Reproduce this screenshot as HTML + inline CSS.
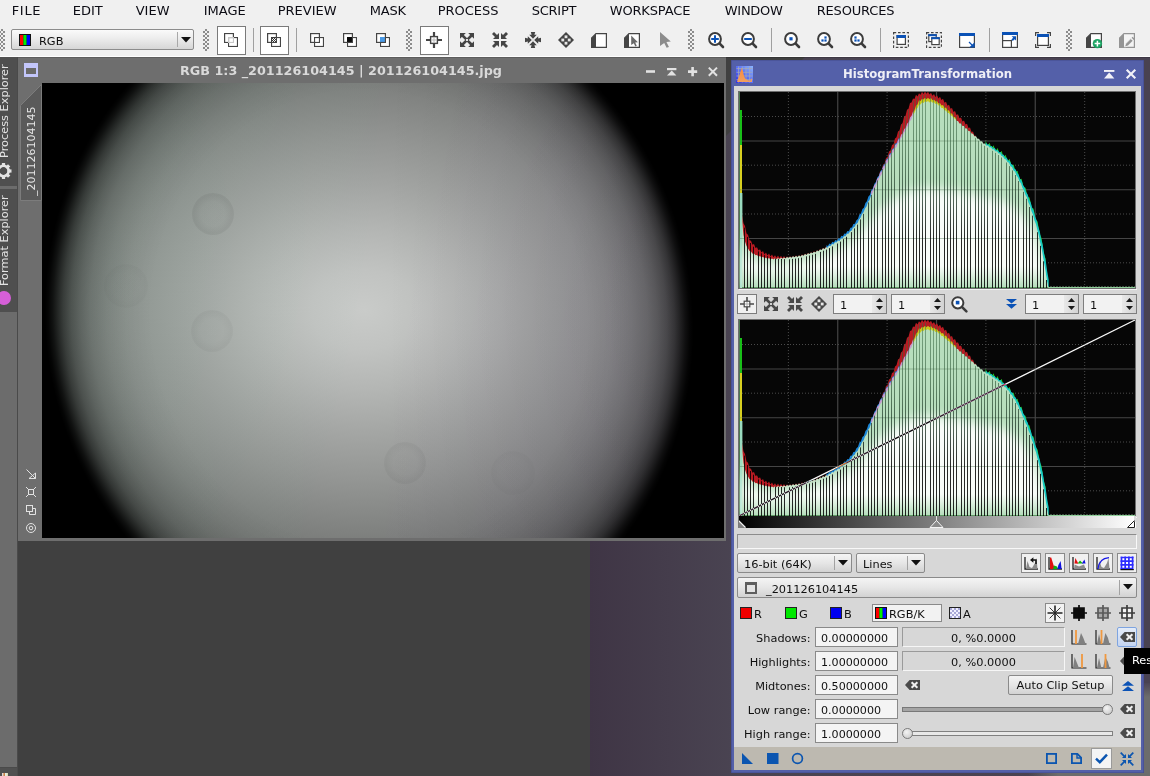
<!DOCTYPE html>
<html><head><meta charset="utf-8"><title>PixInsight</title>
<style>
*{box-sizing:border-box;margin:0;padding:0}
html,body{width:1150px;height:776px;overflow:hidden;background:#404040}
body{position:relative;font-family:"DejaVu Sans","Liberation Sans",sans-serif;font-size:11.33px;color:#101010;line-height:15px}
div,span,svg.ic{position:absolute}
svg.ic{overflow:visible}
#menubar{left:0;top:0;width:1150px;height:20px;background:#f0f0f0;white-space:nowrap}
#menubar span{top:3px;line-height:15px;color:#0c0c14;font-size:13px}
#toolbar{left:0;top:20px;width:1150px;height:37px;background:#f0f0f0;border-bottom:1px solid #fdfdfd}
.grip{width:6px;height:22px;top:9px;background-color:#f0f0f0;background-image:linear-gradient(45deg,#8c8c8c 25%,transparent 25%,transparent 75%,#8c8c8c 75%),linear-gradient(45deg,#8c8c8c 25%,transparent 25%,transparent 75%,#8c8c8c 75%);background-size:4px 4px;background-position:0 0,2px 2px}
.tsep{width:1px;height:24px;top:8px;background:#a0a0a0}
.tbtn{width:29px;height:29px;top:6px;background:#fff;border:1px solid #7a7a7a}
#workspace{left:18px;top:57px;width:1132px;height:719px;background:#404040}
#wsp{left:0;top:0;width:1132px;height:719px;background:linear-gradient(90deg,#3f3545 572px,#4a4452 720px,#494251 1132px);clip-path:polygon(572px 719px,572px 215px,794px -7px,1132px -7px,1132px 719px)}
#wsl{left:0;top:0;width:1132px;height:1px;background:rgba(0,0,0,.16)}
#sidebar{left:0;top:57px;width:18px;height:719px;background:#6c6c6c;border-right:1px solid #4a4a4a;overflow:hidden}
.vtxt{transform-origin:0 0;transform:rotate(-90deg);white-space:nowrap;line-height:15px;height:15px}

</style></head><body>
<div id="menubar"><span style="left:11.7px;letter-spacing:0.7px">FILE</span><span style="left:72.7px">EDIT</span><span style="left:135.7px">VIEW</span><span style="left:203.7px">IMAGE</span><span style="left:277.7px">PREVIEW</span><span style="left:369.7px;letter-spacing:-0.2px">MASK</span><span style="left:437.7px">PROCESS</span><span style="left:531.7px;letter-spacing:-0.25px">SCRIPT</span><span style="left:609.7px;letter-spacing:-0.15px">WORKSPACE</span><span style="left:724.7px;letter-spacing:-0.25px">WINDOW</span><span style="left:816.7px;letter-spacing:-0.18px">RESOURCES</span></div>
<div id="toolbar"><div style="left:11px;top:9px;width:183px;height:21px;border:1px solid #8c8c8c;border-radius:2px;background:linear-gradient(#fafafa,#ececec 45%,#d6d6d6)"><svg class="ic" style="left:7px;top:4px" width="12" height="12" viewBox="0 0 12 12"><rect width="12" height="12" fill="#111"/><rect x="1" y="1" width="3.4" height="10" fill="#f00"/><rect x="4.4" y="1" width="3.3" height="10" fill="#0e0"/><rect x="7.7" y="1" width="3.3" height="10" fill="#00f"/></svg><span style="left:27px;top:3.5px">RGB</span><div style="left:165px;top:2px;width:1px;height:15px;background:#a8a8a8"></div><svg class="ic" style="left:169px;top:7px" width="10" height="6" viewBox="0 0 10 6"><path d="M0 0H10L5 5.6Z" fill="#111"/></svg></div><div class="grip" style="left:-1px"></div><div class="grip" style="left:203px"></div><div class="grip" style="left:406px"></div><div class="grip" style="left:688px"></div><div class="grip" style="left:1066px"></div><div class="tsep" style="left:253px"></div><div class="tsep" style="left:296px"></div><div class="tsep" style="left:771px"></div><div class="tsep" style="left:880px"></div><div class="tsep" style="left:989px"></div><div class="tbtn" style="left:217px"></div><div class="tbtn" style="left:260px"></div><div class="tbtn" style="left:420px"></div><svg class="ic" style="left:224px;top:13px" width="14" height="14" viewBox="0 0 14 14" ><rect x="0.55" y="0.55" width="8.9" height="8.9" fill="#fff" stroke="#454545" stroke-width="1.1"/><rect x="4.55" y="4.55" width="8.9" height="8.9" fill="#fff" stroke="#454545" stroke-width="1.1"/><rect x="4.55" y="4.55" width="4.9" height="4.9" fill="none" stroke="#c8c8c8" stroke-width="1.1"/><path d="M4 9.45H0.55V0.55H9.45V4" fill="none" stroke="#454545" stroke-width="1.1"/></svg><svg class="ic" style="left:267px;top:13px" width="14" height="14" viewBox="0 0 14 14" ><rect x="0.55" y="0.55" width="8.9" height="8.9" fill="#fff" stroke="#454545" stroke-width="1.1"/><rect x="4.55" y="4.55" width="8.9" height="8.9" fill="#fff" stroke="#454545" stroke-width="1.1"/><rect x="4" y="4" width="1" height="1" fill="#333"/><rect x="4" y="6" width="1" height="1" fill="#333"/><rect x="4" y="8" width="1" height="1" fill="#333"/><rect x="5" y="5" width="1" height="1" fill="#333"/><rect x="5" y="7" width="1" height="1" fill="#333"/><rect x="5" y="9" width="1" height="1" fill="#333"/><rect x="6" y="4" width="1" height="1" fill="#333"/><rect x="6" y="6" width="1" height="1" fill="#333"/><rect x="6" y="8" width="1" height="1" fill="#333"/><rect x="7" y="5" width="1" height="1" fill="#333"/><rect x="7" y="7" width="1" height="1" fill="#333"/><rect x="7" y="9" width="1" height="1" fill="#333"/><rect x="8" y="4" width="1" height="1" fill="#333"/><rect x="8" y="6" width="1" height="1" fill="#333"/><rect x="8" y="8" width="1" height="1" fill="#333"/><rect x="9" y="5" width="1" height="1" fill="#333"/><rect x="9" y="7" width="1" height="1" fill="#333"/><rect x="9" y="9" width="1" height="1" fill="#333"/><rect x="0.55" y="0.55" width="8.9" height="8.9" fill="none" stroke="#454545" stroke-width="1.1"/></svg><svg class="ic" style="left:310px;top:13px" width="14" height="14" viewBox="0 0 14 14" ><rect x="0.55" y="0.55" width="8.9" height="8.9" fill="#fff" stroke="#454545" stroke-width="1.1"/><rect x="4.55" y="4.55" width="8.9" height="8.9" fill="#fff" stroke="#454545" stroke-width="1.1"/><rect x="0.55" y="0.55" width="8.9" height="8.9" fill="none" stroke="#454545" stroke-width="1.1"/></svg><svg class="ic" style="left:343px;top:13px" width="14" height="14" viewBox="0 0 14 14" ><rect x="0.55" y="0.55" width="8.9" height="8.9" fill="#fff" stroke="#454545" stroke-width="1.1"/><rect x="4.55" y="4.55" width="8.9" height="8.9" fill="#fff" stroke="#454545" stroke-width="1.1"/><rect x="4" y="4" width="6" height="6" fill="#0a0a0a"/><rect x="0.55" y="0.55" width="8.9" height="8.9" fill="none" stroke="#454545" stroke-width="1.1"/></svg><svg class="ic" style="left:376px;top:13px" width="14" height="14" viewBox="0 0 14 14" ><rect x="0.55" y="0.55" width="8.9" height="8.9" fill="#fff" stroke="#454545" stroke-width="1.1"/><rect x="4.55" y="4.55" width="8.9" height="8.9" fill="#fff" stroke="#454545" stroke-width="1.1"/><rect x="4" y="4" width="6" height="6" fill="#4a9ae6"/><rect x="0.55" y="0.55" width="8.9" height="8.9" fill="none" stroke="#454545" stroke-width="1.1"/></svg><svg class="ic" style="left:426px;top:12px" width="16" height="16" viewBox="0 0 16 16" ><path d="M8 0V16M0 8H16" stroke="#454545" stroke-width="2.2"/><rect x="4.6" y="4.6" width="6.8" height="6.8" fill="#fff" stroke="#454545" stroke-width="1.4"/><path d="M8 5.5V10.5M5.5 8H10.5" stroke="#bbb" stroke-width="1"/></svg><svg class="ic" style="left:460px;top:13px" width="14" height="14" viewBox="0 0 14 14" ><g transform="rotate(0 7 7)"><path d="M0 0H5.8L0 5.8Z" fill="#454545"/><path d="M2 2L6.4 6.4" stroke="#454545" stroke-width="2.7"/></g><g transform="rotate(90 7 7)"><path d="M0 0H5.8L0 5.8Z" fill="#454545"/><path d="M2 2L6.4 6.4" stroke="#454545" stroke-width="2.7"/></g><g transform="rotate(180 7 7)"><path d="M0 0H5.8L0 5.8Z" fill="#454545"/><path d="M2 2L6.4 6.4" stroke="#454545" stroke-width="2.7"/></g><g transform="rotate(270 7 7)"><path d="M0 0H5.8L0 5.8Z" fill="#454545"/><path d="M2 2L6.4 6.4" stroke="#454545" stroke-width="2.7"/></g><rect x="6" y="6" width="2" height="2" fill="#e0e0e0"/></svg><svg class="ic" style="left:492px;top:12px" width="16" height="16" viewBox="0 0 16 16" ><g transform="rotate(0 8 8)"><path d="M7 7V1L1 7Z" fill="#454545"/><path d="M1 1L5 5" stroke="#454545" stroke-width="2.8"/></g><g transform="rotate(90 8 8)"><path d="M7 7V1L1 7Z" fill="#454545"/><path d="M1 1L5 5" stroke="#454545" stroke-width="2.8"/></g><g transform="rotate(180 8 8)"><path d="M7 7V1L1 7Z" fill="#454545"/><path d="M1 1L5 5" stroke="#454545" stroke-width="2.8"/></g><g transform="rotate(270 8 8)"><path d="M7 7V1L1 7Z" fill="#454545"/><path d="M1 1L5 5" stroke="#454545" stroke-width="2.8"/></g></svg><svg class="ic" style="left:525px;top:12px" width="16" height="16" viewBox="0 0 16 16" ><g transform="rotate(0 8 8)"><path d="M8 6.8L4.2 2.8H6.6L5.8 0H10.2L9.4 2.8H11.8Z" fill="#454545"/></g><g transform="rotate(90 8 8)"><path d="M8 6.8L4.2 2.8H6.6L5.8 0H10.2L9.4 2.8H11.8Z" fill="#454545"/></g><g transform="rotate(180 8 8)"><path d="M8 6.8L4.2 2.8H6.6L5.8 0H10.2L9.4 2.8H11.8Z" fill="#454545"/></g><g transform="rotate(270 8 8)"><path d="M8 6.8L4.2 2.8H6.6L5.8 0H10.2L9.4 2.8H11.8Z" fill="#454545"/></g><rect x="7.2" y="7.2" width="1.6" height="1.6" fill="#ddd"/></svg><svg class="ic" style="left:558px;top:12px" width="16" height="16" viewBox="0 0 16 16" ><path d="M8 0L16 8L8 16L0 8Z" fill="#454545"/><rect x="6.6" y="3.4" width="2.8" height="2.8" fill="#e8e8e8"/><rect x="6.6" y="9.8" width="2.8" height="2.8" fill="#e8e8e8"/><rect x="3.4" y="6.6" width="2.8" height="2.8" fill="#e8e8e8"/><rect x="9.8" y="6.6" width="2.8" height="2.8" fill="#e8e8e8"/></svg><svg class="ic" style="left:591px;top:13px" width="16" height="15" viewBox="0 0 16 15" ><path d="M5 0.6H15.4V14.4H0.6V5Z" fill="#fff" stroke="#454545" stroke-width="1.2"/><path d="M5 0.6V14.4H0.6V5Z" fill="#454545"/></svg><svg class="ic" style="left:624px;top:13px" width="16" height="15" viewBox="0 0 16 15" ><path d="M5 0.6H15.4V14.4H0.6V5Z" fill="#fff" stroke="#454545" stroke-width="1.2"/><path d="M5 0.6V14.4H0.6V5Z" fill="#454545"/><path d="M0 0L8.2 8L4.9 8.3L6.8 12.4L5 13.2L3.2 9.2L0 11.6Z" transform="translate(7.2 2.6) scale(0.82)" fill="#6a6a6a"/></svg><svg class="ic" style="left:660px;top:12px" width="12" height="16" viewBox="0 0 12 16" ><path d="M0 0L8.2 8L4.9 8.3L6.8 12.4L5 13.2L3.2 9.2L0 11.6Z" transform="scale(1.32 1.2)" fill="#8c8c8c"/></svg><svg class="ic" style="left:708px;top:12px" width="16" height="16" viewBox="0 0 16 16" ><path d="M11.2 11.2L15 15" stroke="#3c3c3c" stroke-width="2.6" stroke-linecap="round"/><circle cx="7" cy="7" r="5.9" fill="#fff" stroke="#3c3c3c" stroke-width="2"/><path d="M7 3.2V10.8M3.2 7H10.8" stroke="#0b52b6" stroke-width="2"/></svg><svg class="ic" style="left:741px;top:12px" width="16" height="16" viewBox="0 0 16 16" ><path d="M11.2 11.2L15 15" stroke="#3c3c3c" stroke-width="2.6" stroke-linecap="round"/><circle cx="7" cy="7" r="5.9" fill="#fff" stroke="#3c3c3c" stroke-width="2"/><path d="M3.2 7H10.8" stroke="#0b52b6" stroke-width="2"/></svg><svg class="ic" style="left:784px;top:12px" width="16" height="16" viewBox="0 0 16 16" ><path d="M11.2 11.2L15 15" stroke="#3c3c3c" stroke-width="2.6" stroke-linecap="round"/><circle cx="7" cy="7" r="5.9" fill="#fff" stroke="#3c3c3c" stroke-width="2"/><rect x="5.4" y="5.2" width="3.2" height="3.2" fill="#0b52b6"/></svg><svg class="ic" style="left:817px;top:12px" width="16" height="16" viewBox="0 0 16 16" ><path d="M11.2 11.2L15 15" stroke="#3c3c3c" stroke-width="2.6" stroke-linecap="round"/><circle cx="7" cy="7" r="5.9" fill="#fff" stroke="#3c3c3c" stroke-width="2"/><rect x="7.4" y="4.4" width="2.2" height="2.2" fill="#0b52b6"/><rect x="4.4" y="7.4" width="2.2" height="2.2" fill="#0b52b6"/><rect x="7.4" y="7.4" width="2.2" height="2.2" fill="#0b52b6"/></svg><svg class="ic" style="left:850px;top:12px" width="16" height="16" viewBox="0 0 16 16" ><path d="M11.2 11.2L15 15" stroke="#3c3c3c" stroke-width="2.6" stroke-linecap="round"/><circle cx="7" cy="7" r="5.9" fill="#fff" stroke="#3c3c3c" stroke-width="2"/><rect x="4.4" y="4.4" width="2.2" height="2.2" fill="#0b52b6"/><rect x="4.4" y="7.4" width="2.2" height="2.2" fill="#0b52b6"/><rect x="7.4" y="7.4" width="2.2" height="2.2" fill="#0b52b6"/></svg><svg class="ic" style="left:893px;top:12px" width="16" height="16" viewBox="0 0 16 16" ><rect x="0.6" y="0.6" width="14.8" height="14.8" fill="none" stroke="#454545" stroke-width="1.2" stroke-dasharray="2.6 1.8"/><rect x="4.1" y="3.6" width="8.3" height="8.8" fill="#fff" stroke="#454545" stroke-width="1.2"/><rect x="3.5" y="3" width="9.5" height="3" fill="#0b52b6"/></svg><svg class="ic" style="left:926px;top:12px" width="16" height="16" viewBox="0 0 16 16" ><rect x="0.6" y="0.6" width="14.8" height="14.8" fill="none" stroke="#454545" stroke-width="1.2" stroke-dasharray="2.6 1.8"/><rect x="2.8000000000000003" y="2.8000000000000003" width="7.3999999999999995" height="6.8" fill="#fff" stroke="#454545" stroke-width="1.2"/><rect x="2.2" y="2.2" width="8.6" height="2" fill="#0b52b6"/><rect x="5.8" y="5.8" width="7.3999999999999995" height="6.8" fill="#fff" stroke="#454545" stroke-width="1.2"/><rect x="5.2" y="5.2" width="8.6" height="2" fill="#0b52b6"/></svg><svg class="ic" style="left:959px;top:13px" width="16" height="15" viewBox="0 0 16 15" ><rect x="0.6" y="0.6" width="14.8" height="13.8" fill="#fff" stroke="#454545" stroke-width="1.2"/><rect x="0" y="0" width="16" height="3" fill="#0b52b6"/><path d="M10 9L14.6 13.6" stroke="#0b52b6" stroke-width="1.3"/><path d="M15.6 9.2V14.6H10.2Z" fill="#0b52b6"/></svg><svg class="ic" style="left:1002px;top:12px" width="16" height="16" viewBox="0 0 16 16" ><rect x="0.6" y="0.6" width="14.8" height="14.8" fill="#fff" stroke="#454545" stroke-width="1.2"/><rect x="0" y="0" width="16" height="3" fill="#0b52b6"/><rect x="0.6" y="8.6" width="8.8" height="6.8" fill="#fff" stroke="#454545" stroke-width="1.2"/><path d="M9.6 4.2H14V8.6L12.6 7.2L10.8 9L9.4 7.6L11.2 5.8Z" fill="#0b52b6"/></svg><svg class="ic" style="left:1035px;top:12px" width="16" height="16" viewBox="0 0 16 16" ><path d="M0.6 4V0.6H4M12 0.6H15.4V4M15.4 12V15.4H12M4 15.4H0.6V12" fill="none" stroke="#454545" stroke-width="1.2"/><rect x="2.6" y="2.6" width="10.8" height="10.8" fill="#fff" stroke="#454545" stroke-width="1.2"/><rect x="2" y="2" width="12" height="3" fill="#0b52b6"/></svg><svg class="ic" style="left:1086px;top:13px" width="17" height="16" viewBox="0 0 17 16" ><path d="M5 0.6H15.4V14.4H0.6V5Z" fill="#fff" stroke="#454545" stroke-width="1.2"/><path d="M5 0.6V14.4H0.6V5Z" fill="#454545"/><circle cx="11.4" cy="10.6" r="4.7" fill="#1ca463"/><path d="M11.4 7.8V13.4M8.6 10.6H14.2" stroke="#fff" stroke-width="1.5"/></svg><svg class="ic" style="left:1119px;top:13px" width="17" height="16" viewBox="0 0 17 16" ><path d="M5 0.6H15.4V14.4H0.6V5Z" fill="#f4f4f4" stroke="#949494" stroke-width="1.2"/><path d="M5 0.6V14.4H0.6V5Z" fill="#949494"/><path d="M5.6 14L6.6 10.8L11.8 5.6L14 7.8L8.8 13Z" fill="#949494" stroke="#f4f4f4" stroke-width="0.8"/><path d="M12.6 4.8L13.6 3.8L15.8 6L14.8 7Z" fill="#949494"/></svg></div>
<div id="workspace"><div id="wsp"></div><div id="wsl"></div><div style="left:1126px;top:626px;width:6px;height:93px;background:linear-gradient(#4c4555,#6c6c6c 14px)"></div><div style="left:1010px;top:716px;width:122px;height:3px;background:linear-gradient(90deg,rgba(108,108,108,0),#6c6c6c 30px)"></div></div>
<div id="sidebar"><div style="left:0;top:0;width:17px;height:129px;background:#4f4f4f"></div><div style="left:0;top:132px;width:17px;height:123px;background:#4f4f4f"></div><div style="left:0;top:710px;width:17px;height:1px;background:#4a4a4a"></div><div style="left:0;top:711px;width:17px;height:8px;background:#505050"></div><div style="left:2px;top:716px;width:6px;height:3px;background:linear-gradient(90deg,#e8f0ff,#c87838 40%,#e8f8f0 60%,#d8d0a0)"></div><div class="vtxt" style="left:-3px;top:101px;color:#e4e4e4;font-size:11.33px">Process Explorer</div><div class="vtxt" style="left:-3px;top:229px;color:#e4e4e4;font-size:11.33px">Format Explorer</div><svg class="ic" style="left:0px;top:106px" width="16" height="16" viewBox="0 0 16 16" ><g transform="translate(3.5 8)"><rect x="-1.6" y="-8" width="3.2" height="4" fill="#e4e4e4" transform="rotate(0)"/><rect x="-1.6" y="-8" width="3.2" height="4" fill="#e4e4e4" transform="rotate(45)"/><rect x="-1.6" y="-8" width="3.2" height="4" fill="#e4e4e4" transform="rotate(90)"/><rect x="-1.6" y="-8" width="3.2" height="4" fill="#e4e4e4" transform="rotate(135)"/><rect x="-1.6" y="-8" width="3.2" height="4" fill="#e4e4e4" transform="rotate(180)"/><rect x="-1.6" y="-8" width="3.2" height="4" fill="#e4e4e4" transform="rotate(225)"/><rect x="-1.6" y="-8" width="3.2" height="4" fill="#e4e4e4" transform="rotate(270)"/><rect x="-1.6" y="-8" width="3.2" height="4" fill="#e4e4e4" transform="rotate(315)"/><circle r="5.2" fill="none" stroke="#e4e4e4" stroke-width="2.6"/></g></svg><div style="left:-3px;top:234px;width:14px;height:14px;border-radius:7px;background:#d65fd8"></div></div>
<div id="imgwin" style="left:18px;top:57px;width:708px;height:484px;background:#6e6e6e"><div style="left:0;top:0;width:708px;height:1px;background:#5c5c5c"></div><div style="left:6px;top:6px;width:14px;height:14px;border:2px solid #c3c6fb;border-top-width:5px;border-bottom-width:3px;background:#6a6a6a"></div><div style="left:0;top:6px;width:708px;text-align:center;font-weight:bold;font-size:12.75px;color:#d9d9d9;white-space:nowrap"><span style="position:relative;left:-31px">RGB 1:3 _201126104145 | 201126104145.jpg</span></div><svg class="ic" style="left:628px;top:10px" width="10" height="10" viewBox="0 0 10 10" ><rect x="0" y="3.2" width="9" height="2.6" fill="#e2e2e2"/></svg><svg class="ic" style="left:649px;top:10px" width="10" height="10" viewBox="0 0 10 10" ><rect x="0" y="1" width="9.4" height="2.2" fill="#e2e2e2"/><path d="M4.7 3.4L9.4 8.6H0Z" fill="#e2e2e2"/></svg><svg class="ic" style="left:670px;top:10px" width="10" height="10" viewBox="0 0 10 10" ><path d="M4.6 0V9.2M0 4.6H9.2" stroke="#e2e2e2" stroke-width="2.6"/></svg><svg class="ic" style="left:690px;top:10px" width="10" height="10" viewBox="0 0 10 10" ><path d="M0.8 0.6L9 8.8M9 0.6L0.8 8.8" stroke="#e2e2e2" stroke-width="2"/></svg><svg class="ic" style="left:2px;top:27px" width="22" height="117" viewBox="0 0 22 117" ><path d="M0.5 21.5L21.5 0.5V116.5H0.5Z" fill="#5a5a5a" stroke="#7c7c7c" stroke-width="1"/></svg><div class="vtxt" style="left:6px;top:139px;color:#e4e4e4;font-size:11px">_201126104145</div><svg class="ic" style="left:8px;top:412px" width="10" height="10" viewBox="0 0 10 10" ><path d="M0.5 0.5L9.5 9.5M9.5 4V9.5H3Z" fill="none" stroke="#e2e2e2" stroke-width="1"/></svg><svg class="ic" style="left:8px;top:430px" width="10" height="10" viewBox="0 0 10 10" ><rect x="2.5" y="2.5" width="5" height="5" fill="none" stroke="#e2e2e2"/><path d="M0 0L2.5 2.5M10 0L7.5 2.5M0 10L2.5 7.5M10 10L7.5 7.5" stroke="#e2e2e2"/></svg><svg class="ic" style="left:8px;top:448px" width="10" height="10" viewBox="0 0 10 10" ><rect x="0.5" y="0.5" width="6" height="6" fill="none" stroke="#e2e2e2"/><path d="M6.5 3.5H9.5V9.5H3.5V6.5" fill="none" stroke="#e2e2e2"/></svg><svg class="ic" style="left:8px;top:466px" width="10" height="10" viewBox="0 0 10 10" ><circle cx="5" cy="5" r="4.5" fill="none" stroke="#e2e2e2"/><circle cx="5" cy="5" r="1.8" fill="none" stroke="#e2e2e2"/></svg><div id="img" style="left:24px;top:26px;width:682px;height:455px;overflow:hidden;background:#000"><div style="left:0;top:0;width:682px;height:455px;background:radial-gradient(ellipse 440px 330px at 322px 227px,#c9cbc9 0,#c1c3c1 12%,#b4b6b4 24%,#a3a5a3 38%,#939593 52%,#898b89 60%,#7c7e7c 70%,#707270 80%,#5c5e5c 100%)"></div><div style="left:0;top:0;width:682px;height:455px;background:linear-gradient(100deg,rgba(0,255,128,.035),rgba(0,0,0,0) 50%,rgba(128,0,255,.035)),linear-gradient(90deg,rgba(0,0,0,0) 50%,rgba(0,0,0,.09))"></div><div style="left:150px;top:110px;width:42px;height:42px;border-radius:50%;background:radial-gradient(circle,rgba(0,0,0,0.006) 0,rgba(0,0,0,0.012) 40%,rgba(0,0,0,0.060) 64%,rgba(0,0,0,0.048) 78%,rgba(0,0,0,0) 100%)"></div><div style="left:149px;top:227px;width:42px;height:42px;border-radius:50%;background:radial-gradient(circle,rgba(0,0,0,0.004) 0,rgba(0,0,0,0.007) 40%,rgba(0,0,0,0.035) 64%,rgba(0,0,0,0.028) 78%,rgba(0,0,0,0) 100%)"></div><div style="left:342px;top:359px;width:42px;height:42px;border-radius:50%;background:radial-gradient(circle,rgba(0,0,0,0.004) 0,rgba(0,0,0,0.008) 40%,rgba(0,0,0,0.040) 64%,rgba(0,0,0,0.032) 78%,rgba(0,0,0,0) 100%)"></div><div style="left:62px;top:181px;width:44px;height:44px;border-radius:50%;background:radial-gradient(circle,rgba(0,0,0,0.002) 0,rgba(0,0,0,0.004) 40%,rgba(0,0,0,0.020) 64%,rgba(0,0,0,0.016) 78%,rgba(0,0,0,0) 100%)"></div><div style="left:449px;top:368px;width:44px;height:44px;border-radius:50%;background:radial-gradient(circle,rgba(0,0,0,0.002) 0,rgba(0,0,0,0.004) 40%,rgba(0,0,0,0.020) 64%,rgba(0,0,0,0.016) 78%,rgba(0,0,0,0) 100%)"></div><div style="left:-100px;top:-100px;width:882px;height:655px;transform-origin:427px 337px;transform:skewX(1.72deg);background:radial-gradient(ellipse 324px 340px at 427px 337px,rgba(0,0,0,0) 0,rgba(0,0,0,0) 67%,rgba(0,0,0,.035) 75%,rgba(0,0,0,.09) 81%,rgba(0,0,0,.17) 86%,rgba(0,0,0,.26) 89%,rgba(0,0,0,.38) 91.9%,rgba(0,0,0,.54) 94.3%,rgba(0,0,0,.67) 95.7%,rgba(0,0,0,.86) 97.6%,rgba(0,0,0,.96) 99%,#000 100%)"></div></div></div>
<div id="ht" style="left:0;top:0;width:0;height:0"><div style="left:731px;top:60px;width:413px;height:713px;background:#5460a9;box-shadow:inset 0 0 0 0.6px #434a8c"></div><div style="left:734px;top:86px;width:407px;height:661px;background:#d7d7d7"></div><div style="left:734px;top:747px;width:407px;height:23px;background:#bdb9b0"></div><svg class="ic" style="left:736px;top:66px" width="17" height="17" viewBox="0 0 17 17" ><defs><linearGradient id="tig" x1="1" y1="0" x2="0" y2="1"><stop offset="0" stop-color="#8cb6ff"/><stop offset=".5" stop-color="#5a70f4"/><stop offset="1" stop-color="#3434e0"/></linearGradient><linearGradient id="tio" x1="0" y1="0" x2="0" y2="1"><stop offset="0" stop-color="#ff8a3a"/><stop offset="1" stop-color="#f0a060"/></linearGradient></defs><rect width="17" height="17" fill="url(#tig)"/><path d="M2.6 0.5V16.5M0.5 2.6H16.5" stroke="#a4a8b8" stroke-width="0.8"/><path d="M6.3 0.5V16.5M0.5 6.3H16.5" stroke="#a4a8b8" stroke-width="0.8"/><path d="M10.0 0.5V16.5M0.5 10.0H16.5" stroke="#a4a8b8" stroke-width="0.8"/><path d="M13.7 0.5V16.5M0.5 13.7H16.5" stroke="#a4a8b8" stroke-width="0.8"/><path d="M1 16L2 13L3.5 9L5 4L5.8 2.2L6.8 5L8 10L9.5 13L12 14.2L14.6 14.4L15.2 12.4L16 12.8V16Z" fill="url(#tio)"/></svg><div style="left:731px;top:66.5px;width:413px;text-align:center;font-weight:bold;font-size:11.7px;color:#eeeef6;white-space:nowrap"><span style="position:relative;left:-10px">HistogramTransformation</span></div><svg class="ic" style="left:1104px;top:70px" width="11" height="9" viewBox="0 0 11 9" ><rect x="0" y="0" width="10.4" height="1.9" fill="#f2f2f8"/><path d="M5.2 2.6L10.4 8.4H0Z" fill="#f2f2f8"/></svg><svg class="ic" style="left:1126px;top:69px" width="10" height="10" viewBox="0 0 10 10" ><path d="M0.7 0.7L9.3 9.3M9.3 0.7L0.7 9.3" stroke="#f2f2f8" stroke-width="2.1"/></svg><svg class="ic" style="left:738px;top:91px" width="400" height="200" viewBox="738 91 400 200"><defs><clipPath id="hca"><path d="M739.0 288L739.0 109.4L740.5 111.3L742.0 221.4L743.5 235.1L745.0 241.4L746.5 246.1L748.0 248.4L749.5 251.1L751.0 251.4L752.5 253.8L754.0 253.4L755.5 255.3L757.0 254.9L758.5 256.7L760.0 256.0L761.5 257.6L763.0 256.8L764.5 258.5L766.0 257.5L767.5 259.0L769.0 258.0L770.5 259.4L772.0 258.4L773.5 259.5L775.0 258.2L776.5 259.3L778.0 257.9L779.5 259.0L781.0 257.7L782.5 258.8L784.0 257.5L785.5 258.5L787.0 257.1L788.5 258.1L790.0 256.7L791.5 257.7L793.0 256.3L794.5 257.3L796.0 255.9L797.5 256.9L799.0 255.5L800.5 256.5L802.0 254.9L803.5 255.7L805.0 254.1L806.5 254.9L808.0 253.3L809.5 254.1L811.0 252.5L812.5 253.3L814.0 251.7L815.5 252.4L817.0 250.6L818.5 251.3L820.0 249.5L821.5 250.1L823.0 248.3L824.5 248.9L826.0 247.2L827.5 247.8L829.0 245.8L830.5 246.1L832.0 244.1L833.5 244.4L835.0 242.3L836.5 242.6L838.0 240.6L839.5 240.9L841.0 238.6L842.5 238.6L844.0 236.2L845.5 236.2L847.0 233.8L848.5 233.8L850.0 231.4L851.5 230.7L853.0 227.7L854.5 227.0L856.0 223.9L857.5 223.2L859.0 219.5L860.5 218.0L862.0 214.0L863.5 212.4L865.0 208.4L866.5 206.4L868.0 202.0L869.5 200.0L871.0 195.5L872.5 193.5L874.0 189.2L875.5 187.2L877.0 182.8L878.5 180.8L880.0 176.4L881.5 174.6L883.0 170.4L884.5 168.6L886.0 164.4L887.5 162.6L889.0 158.7L890.5 157.3L892.0 153.5L893.5 152.2L895.0 148.4L896.5 147.0L898.0 143.3L899.5 141.9L901.0 138.1L902.5 136.7L904.0 132.7L905.5 131.1L907.0 127.1L908.5 125.5L910.0 121.2L911.5 119.2L913.0 114.7L914.5 112.7L916.0 109.0L917.5 108.1L919.0 104.8L920.5 104.4L922.0 102.6L923.5 103.1L925.0 101.3L926.5 102.1L928.0 101.1L929.5 102.4L931.0 101.3L932.5 102.8L934.0 102.2L935.5 104.1L937.0 103.5L938.5 105.5L940.0 105.5L941.5 107.9L943.0 108.0L944.5 110.4L946.0 110.4L947.5 112.9L949.0 113.1L950.5 115.6L952.0 115.7L953.5 118.3L955.0 118.4L956.5 120.9L958.0 121.0L959.5 123.4L961.0 123.5L962.5 126.0L964.0 126.1L965.5 128.5L967.0 128.6L968.5 131.1L970.0 131.2L971.5 133.6L973.0 133.7L974.5 136.2L976.0 136.2L977.5 138.7L979.0 138.7L980.5 141.2L982.0 141.2L983.5 143.7L985.0 143.5L986.5 145.7L988.0 145.4L989.5 147.5L991.0 147.3L992.5 149.4L994.0 149.3L995.5 151.5L997.0 151.3L998.5 153.6L1000.0 153.4L1001.5 156.1L1003.0 156.4L1004.5 159.1L1006.0 159.4L1007.5 162.1L1009.0 162.8L1010.5 166.2L1012.0 167.1L1013.5 170.5L1015.0 171.4L1016.5 175.6L1018.0 177.4L1019.5 181.6L1021.0 183.4L1022.5 188.1L1024.0 190.4L1025.5 195.1L1027.0 197.4L1028.5 202.8L1030.0 205.8L1031.5 211.2L1033.0 214.6L1034.5 220.6L1036.0 224.2L1037.5 230.8L1039.0 236.4L1040.5 244.3L1042.0 250.7L1043.5 259.9L1045.0 267.8L1046.5 278.6L1048.0 286.4L1049.5 287.6L1051.0 286.4L1052.5 287.6L1054.0 286.4L1055.5 287.6L1057.0 286.4L1058.5 287.6L1060.0 286.4L1061.5 287.6L1063.0 286.4L1064.5 287.6L1066.0 286.4L1067.5 287.6L1069.0 286.4L1070.5 287.6L1072.0 286.4L1073.5 287.6L1075.0 286.4L1076.5 287.6L1078.0 286.4L1079.5 287.6L1081.0 286.4L1082.5 287.6L1084.0 286.4L1085.5 287.6L1087.0 286.4L1088.5 287.6L1090.0 286.4L1091.5 287.6L1093.0 286.4L1094.5 287.6L1096.0 286.4L1097.5 287.6L1099.0 286.4L1100.5 287.6L1102.0 286.4L1103.5 287.6L1105.0 286.4L1106.5 287.6L1108.0 286.4L1109.5 287.6L1111.0 286.4L1112.5 287.6L1114.0 286.4L1115.5 287.6L1117.0 286.4L1118.5 287.6L1120.0 286.4L1121.5 287.6L1123.0 286.4L1124.5 287.6L1126.0 286.4L1127.5 287.6L1129.0 286.4L1130.5 287.6L1132.0 286.4L1133.5 287.6L1135.0 286.4L1135.0 288Z"/></clipPath><linearGradient id="cga" gradientUnits="userSpaceOnUse" x1="0" y1="92" x2="0" y2="288"><stop offset="0" stop-color="#3c6a46" stop-opacity=".6"/><stop offset=".3" stop-color="#2c5535" stop-opacity=".72"/><stop offset=".55" stop-color="#10281a" stop-opacity=".85"/><stop offset=".75" stop-color="#000" stop-opacity="1"/><stop offset="1" stop-color="#000"/></linearGradient><radialGradient id="wga" gradientUnits="userSpaceOnUse" cx="930" cy="232" r="1" gradientTransform="translate(930 232) scale(95 52) translate(-930 -232)"><stop offset="0" stop-color="#fff" stop-opacity="1"/><stop offset=".45" stop-color="#fff" stop-opacity=".75"/><stop offset="1" stop-color="#fff" stop-opacity="0"/></radialGradient><radialGradient id="wha" gradientUnits="userSpaceOnUse" cx="800" cy="272" r="1" gradientTransform="translate(800 272) scale(70 14) translate(-800 -272)"><stop offset="0" stop-color="#fff" stop-opacity=".8"/><stop offset="1" stop-color="#fff" stop-opacity="0"/></radialGradient><filter id="bla" x="-5%" y="-20%" width="110%" height="140%"><feGaussianBlur stdDeviation="5 6"/></filter><linearGradient id="bga" gradientUnits="userSpaceOnUse" x1="0" y1="266" x2="0" y2="288"><stop offset="0" stop-color="#b4dcba" stop-opacity="0"/><stop offset="1" stop-color="#b4dcba" stop-opacity=".95"/></linearGradient></defs><rect x="738" y="91" width="398" height="198" fill="#6e6e6e"/><rect x="739" y="289" width="398" height="1" fill="#f4f4f4"/><rect x="739" y="92" width="396" height="196" fill="#060606"/><path d="M837.75 92V288M739 141.00H1135" stroke="#454545" stroke-width="1.2"/><path d="M936.50 92V288M739 189.75H1135" stroke="#454545" stroke-width="1.2"/><path d="M1035.25 92V288M739 238.50H1135" stroke="#454545" stroke-width="1.2"/><path d="M788.4 92V288M739 116.5H1135" stroke="#4a4a4a" stroke-width="1" stroke-dasharray="1 2"/><path d="M887.1 92V288M739 165.2H1135" stroke="#4a4a4a" stroke-width="1" stroke-dasharray="1 2"/><path d="M985.9 92V288M739 214.0H1135" stroke="#4a4a4a" stroke-width="1" stroke-dasharray="1 2"/><path d="M1084.7 92V288M739 262.8H1135" stroke="#4a4a4a" stroke-width="1" stroke-dasharray="1 2"/><path d="M742.0 288L742.0 214.8L743.5 223.2L745.0 226.1L746.5 233.5L748.0 234.8L749.5 240.2L751.0 240.8L752.5 244.8L754.0 244.1L755.5 248.1L757.0 247.3L758.5 250.6L760.0 249.2L761.5 252.5L763.0 251.1L764.5 254.4L766.0 252.6L767.5 255.4L769.0 253.5L770.5 256.4L772.0 254.4L773.5 257.2L775.0 255.3L776.5 257.8L778.0 255.5L779.5 258.0L781.0 255.8L782.5 258.3L784.0 256.0L785.5 258.5L787.0 256.2L788.5 258.6L790.0 256.1L791.5 258.3L793.0 255.7L794.5 257.9L796.0 255.3L797.5 257.5L799.0 254.9L800.5 257.1L802.0 254.3L803.5 256.3L805.0 253.5L806.5 255.5L808.0 252.7L809.5 254.7L811.0 251.9L812.5 253.9L814.0 251.1L815.5 253.0L817.0 250.0L818.5 251.9L820.0 248.9L821.5 250.7L823.0 247.7L824.5 249.5L826.0 246.6L827.5 248.4L829.0 245.2L830.5 246.7L832.0 243.5L833.5 245.0L835.0 241.7L836.5 243.2L838.0 240.0L839.5 241.5L841.0 238.0L842.5 239.2L844.0 235.6L845.5 236.8L847.0 233.2L848.5 234.4L850.0 230.8L851.5 231.3L853.0 227.1L854.5 227.6L856.0 223.3L857.5 223.8L859.0 218.9L860.5 218.6L862.0 213.4L863.5 213.0L865.0 207.8L866.5 206.5L868.0 200.4L869.5 199.1L871.0 193.0L872.5 191.8L874.0 185.7L875.5 184.5L877.0 178.4L878.5 177.2L880.0 171.4L881.5 170.4L883.0 164.7L884.5 163.7L886.0 157.9L887.5 157.1L889.0 151.4L890.5 150.6L892.0 145.0L893.5 144.2L895.0 138.4L896.5 137.3L898.0 131.5L899.5 130.5L901.0 124.5L902.5 123.2L904.0 117.0L905.5 115.7L907.0 109.7L908.5 108.8L910.0 103.0L911.5 102.6L913.0 98.4L914.5 99.0L916.0 94.8L917.5 96.4L919.0 93.2L920.5 94.7L922.0 91.8L923.5 94.0L925.0 91.5L926.5 93.7L928.0 91.7L929.5 94.6L931.0 92.8L932.5 95.8L934.0 94.0L935.5 97.0L937.0 95.3L938.5 98.5L940.0 96.8L941.5 100.0L943.0 98.8L944.5 102.7L946.0 101.8L947.5 105.7L949.0 104.8L950.5 108.7L952.0 107.9L953.5 111.9L955.0 111.0L956.5 115.0L958.0 114.2L959.5 118.2L961.0 117.4L962.5 121.4L964.0 120.5L965.5 124.5L967.0 123.7L968.5 127.9L970.0 127.5L971.5 131.9L973.0 131.6L974.5 136.0L976.0 135.6L976.0 288Z" fill="#b81a22"/><path d="M910.0 288L910.0 121.2L911.5 118.6L913.0 112.8L914.5 110.2L916.0 105.5L917.5 104.4L919.0 100.2L920.5 101.0L922.0 98.7L923.5 99.5L925.0 97.7L926.5 99.3L928.0 97.7L929.5 99.3L931.0 98.1L932.5 100.3L934.0 99.4L935.5 101.6L937.0 100.9L938.5 103.5L940.0 102.9L941.5 105.5L943.0 105.0L944.5 107.9L946.0 107.5L947.5 110.4L949.0 110.3L950.5 113.6L952.0 113.6L953.5 116.9L955.0 117.0L956.5 120.2L956.5 288Z" fill="#c8c81c"/><path d="M826.4 288L826.4 245.2L827.9 245.9L829.4 243.4L830.9 244.2L832.4 241.7L833.9 242.4L835.4 239.9L836.9 240.7L838.4 238.2L839.9 238.6L841.4 235.8L842.9 236.2L844.4 233.4L845.9 233.8L847.4 231.0L848.9 231.2L850.4 227.7L851.9 227.4L853.4 223.9L854.9 223.7L856.4 220.2L857.9 219.0L859.4 214.6L860.9 213.4L862.4 209.1L863.9 207.7L865.4 202.9L866.9 201.3L868.4 196.5L869.9 194.9L871.4 190.1L872.9 188.5L874.4 183.7L875.9 182.1L877.4 177.3L878.9 175.8L880.4 171.2L881.9 169.8L883.4 165.2L884.9 163.8L886.4 159.2L887.9 158.2L889.4 154.1L890.9 153.1L892.4 148.9L893.9 147.9L895.4 143.8L896.9 142.8L898.4 138.6L899.9 137.7L899.9 288Z" fill="#1a86d8"/><path d="M871.2 288L871.2 191.6L872.7 190.0L874.2 185.2L875.7 183.6L877.2 178.8L878.7 177.3L880.2 172.6L881.7 171.2L883.2 166.6L884.7 165.2L886.2 160.6L887.7 159.3L889.2 155.2L890.7 154.2L892.2 150.0L893.7 149.1L895.2 144.9L896.7 143.9L898.2 139.7L899.7 138.8L901.2 134.6L902.7 133.4L904.2 129.0L905.7 127.8L907.2 123.5L908.7 122.1L910.2 117.3L911.7 115.6L913.2 110.8L913.2 288Z" fill="#c79ad0"/><path d="M985.6 288L985.6 140.3L987.6 145.9L989.6 142.8L991.6 148.4L993.6 145.3L995.6 151.1L997.6 148.1L999.6 153.8L1001.6 150.8L1003.6 157.2L1005.6 154.8L1007.6 161.2L1009.6 158.8L1011.6 166.1L1013.6 164.5L1015.6 171.8L1017.6 170.8L1019.6 179.2L1021.6 178.8L1023.6 187.5L1025.6 187.8L1027.6 196.9L1029.6 197.6L1031.6 207.6L1033.6 208.8L1035.6 219.6L1037.6 221.6L1039.6 233.7L1041.6 238.3L1043.6 252.5L1045.6 258.8L1045.6 288Z" fill="#22c022"/><path d="M985.7 288L985.7 142.3L987.2 144.4L988.7 144.2L990.2 146.3L991.7 146.1L993.2 148.2L994.7 148.0L996.2 150.2L997.7 150.1L999.2 152.3L1000.7 152.1L1002.2 154.5L1003.7 154.8L1005.2 157.5L1006.7 157.8L1008.2 160.5L1009.7 160.8L1011.2 164.1L1012.7 165.1L1014.2 168.4L1015.7 169.4L1017.2 173.0L1018.7 174.8L1020.2 179.0L1021.7 180.8L1023.2 185.2L1024.7 187.5L1026.2 192.2L1027.7 194.5L1029.2 199.4L1030.7 202.4L1032.2 207.8L1033.7 210.8L1035.2 216.8L1036.7 220.4L1038.2 226.4L1039.7 231.3L1041.2 239.2L1042.7 244.8L1044.2 254.0L1045.7 260.8L1047.2 271.6L1048.7 279.8L1048.7 288Z" fill="#14c8c4"/><rect x="740" y="110" width="2" height="35" fill="#18c018"/><rect x="740" y="145" width="2" height="48" fill="#d8d020"/><rect x="740" y="193" width="2.4" height="95" fill="#9adcc0"/><rect x="739" y="92" width="1" height="196" fill="#4c7a50"/><g clip-path="url(#hca)"><rect x="742" y="92" width="394" height="196" fill="#b7debd"/><path d="M742.0 288L742.0 235.5L745.0 250.1L748.0 255.7L751.0 258.1L754.0 259.8L757.0 261.1L760.0 262.0L763.0 262.7L766.0 263.3L769.0 263.7L772.0 264.0L775.0 263.8L778.0 263.6L781.0 263.4L784.0 263.2L787.0 263.0L790.0 262.6L793.0 262.3L796.0 261.9L799.0 261.6L802.0 261.0L805.0 260.4L808.0 259.7L811.0 259.0L814.0 258.4L817.0 257.5L820.0 256.6L823.0 255.6L826.0 254.7L829.0 253.6L832.0 252.2L835.0 250.9L838.0 249.5L841.0 248.0L844.0 246.2L847.0 244.4L850.0 242.6L853.0 239.9L856.0 237.3L859.0 234.3L862.0 230.7L865.0 227.1L868.0 223.4L871.0 219.6L874.0 216.2L877.0 213.0L880.0 209.8L883.0 207.3L886.0 204.7L889.0 202.4L892.0 200.6L895.0 198.7L898.0 197.2L901.0 195.7L904.0 194.3L907.0 193.0L910.0 191.7L913.0 190.6L916.0 189.6L919.0 189.1L922.0 188.8L925.0 188.7L928.0 188.7L931.0 188.7L934.0 188.8L937.0 188.9L940.0 189.2L943.0 189.5L946.0 189.8L949.0 190.2L952.0 190.7L955.0 191.1L958.0 191.6L961.0 192.1L964.0 192.7L967.0 193.2L970.0 193.9L973.0 194.5L976.0 195.1L979.0 195.8L982.0 196.5L985.0 197.2L988.0 197.8L991.0 198.4L994.0 199.0L997.0 199.7L1000.0 200.4L1003.0 201.6L1006.0 202.7L1009.0 204.0L1012.0 205.8L1015.0 207.6L1018.0 210.4L1021.0 213.2L1024.0 216.9L1027.0 220.6L1030.0 225.6L1033.0 231.1L1036.0 237.6L1039.0 246.5L1042.0 257.7L1045.0 272.5L1048.0 288.0L1051.0 288.0L1054.0 288.0L1057.0 288.0L1060.0 288.0L1063.0 288.0L1066.0 288.0L1069.0 288.0L1072.0 288.0L1075.0 288.0L1078.0 288.0L1081.0 288.0L1084.0 288.0L1087.0 288.0L1090.0 288.0L1093.0 288.0L1096.0 288.0L1099.0 288.0L1102.0 288.0L1105.0 288.0L1108.0 288.0L1111.0 288.0L1114.0 288.0L1117.0 288.0L1120.0 288.0L1123.0 288.0L1126.0 288.0L1129.0 288.0L1132.0 288.0L1135.0 288.0L1135.0 288Z" fill="#fff" opacity=".9" filter="url(#bla)"/><rect x="742" y="260" width="394" height="28" fill="url(#bga)"/><path d="M739 141.00H1135" stroke="#5c7c60" stroke-opacity=".45" stroke-width="1.2"/><path d="M739 189.75H1135" stroke="#5c7c60" stroke-opacity=".45" stroke-width="1.2"/><path d="M739 238.50H1135" stroke="#5c7c60" stroke-opacity=".45" stroke-width="1.2"/><rect x="742" y="287" width="394" height="1.2" fill="#5e9a64"/></g><path d="M744.5 227.7V288M747.5 237.0V288M750.5 243.0V288M753.5 246.7V288M758.5 251.4V288M761.5 253.3V288M764.5 255.2V288M767.5 256.2V288M770.5 257.1V288M775.5 258.5V288M778.5 258.8V288M781.5 259.0V288M784.5 259.2V288M789.5 259.3V288M792.5 258.9V288M795.5 258.6V288M798.5 258.2V288M801.5 257.6V288M806.5 256.3V288M809.5 255.5V288M812.5 254.7V288M815.5 253.8V288M820.5 251.9V288M823.5 250.7V288M826.5 249.6V288M829.5 248.1V288M832.5 246.4V288M837.5 243.5V288M840.5 241.6V288M843.5 239.2V288M846.5 236.8V288M851.5 232.1V288M854.5 228.4V288M857.5 224.6V288M860.5 219.4V288M863.5 213.8V288M868.5 202.4V288M871.5 195.0V288M874.5 187.7V288M877.5 180.4V288M882.5 169.0V288M885.5 162.2V288M888.5 155.7V288M891.5 149.3V288M894.5 142.7V288M899.5 131.3V288M902.5 124.0V288M905.5 116.5V288M908.5 109.6V288M913.5 101.0V288M916.5 97.7V288M919.5 96.1V288M922.5 94.9V288M925.5 94.6V288M930.5 95.8V288M933.5 97.0V288M936.5 98.2V288M939.5 99.8V288M944.5 103.5V288M947.5 106.5V288M950.5 109.5V288M953.5 112.7V288M956.5 115.8V288M961.5 121.1V288M964.5 124.3V288M967.5 127.5V288M970.5 131.4V288M975.5 138.1V288M978.5 140.9V288M981.5 143.4V288M984.5 145.8V288M987.5 147.7V288M992.5 150.8V288M995.5 152.9V288M998.5 155.0V288M1001.5 157.5V288M1006.5 162.5V288M1009.5 166.1V288M1012.5 170.4V288M1015.5 175.0V288M1018.5 181.0V288M1023.5 191.8V288M1026.5 198.8V288M1029.5 207.0V288M1032.5 215.6V288M1037.5 232.2V288M1040.5 245.8V288M1043.5 261.3V288M1046.5 280.0V288" stroke="url(#cga)" stroke-width="0.85" fill="none"/><rect x="1048" y="287" width="87" height="1" fill="#8fcf9a"/></svg><svg class="ic" style="left:738px;top:319px" width="400" height="200" viewBox="738 91 400 200"><defs><clipPath id="hcb"><path d="M739.0 288L739.0 109.4L740.5 111.3L742.0 221.4L743.5 235.1L745.0 241.4L746.5 246.1L748.0 248.4L749.5 251.1L751.0 251.4L752.5 253.8L754.0 253.4L755.5 255.3L757.0 254.9L758.5 256.7L760.0 256.0L761.5 257.6L763.0 256.8L764.5 258.5L766.0 257.5L767.5 259.0L769.0 258.0L770.5 259.4L772.0 258.4L773.5 259.5L775.0 258.2L776.5 259.3L778.0 257.9L779.5 259.0L781.0 257.7L782.5 258.8L784.0 257.5L785.5 258.5L787.0 257.1L788.5 258.1L790.0 256.7L791.5 257.7L793.0 256.3L794.5 257.3L796.0 255.9L797.5 256.9L799.0 255.5L800.5 256.5L802.0 254.9L803.5 255.7L805.0 254.1L806.5 254.9L808.0 253.3L809.5 254.1L811.0 252.5L812.5 253.3L814.0 251.7L815.5 252.4L817.0 250.6L818.5 251.3L820.0 249.5L821.5 250.1L823.0 248.3L824.5 248.9L826.0 247.2L827.5 247.8L829.0 245.8L830.5 246.1L832.0 244.1L833.5 244.4L835.0 242.3L836.5 242.6L838.0 240.6L839.5 240.9L841.0 238.6L842.5 238.6L844.0 236.2L845.5 236.2L847.0 233.8L848.5 233.8L850.0 231.4L851.5 230.7L853.0 227.7L854.5 227.0L856.0 223.9L857.5 223.2L859.0 219.5L860.5 218.0L862.0 214.0L863.5 212.4L865.0 208.4L866.5 206.4L868.0 202.0L869.5 200.0L871.0 195.5L872.5 193.5L874.0 189.2L875.5 187.2L877.0 182.8L878.5 180.8L880.0 176.4L881.5 174.6L883.0 170.4L884.5 168.6L886.0 164.4L887.5 162.6L889.0 158.7L890.5 157.3L892.0 153.5L893.5 152.2L895.0 148.4L896.5 147.0L898.0 143.3L899.5 141.9L901.0 138.1L902.5 136.7L904.0 132.7L905.5 131.1L907.0 127.1L908.5 125.5L910.0 121.2L911.5 119.2L913.0 114.7L914.5 112.7L916.0 109.0L917.5 108.1L919.0 104.8L920.5 104.4L922.0 102.6L923.5 103.1L925.0 101.3L926.5 102.1L928.0 101.1L929.5 102.4L931.0 101.3L932.5 102.8L934.0 102.2L935.5 104.1L937.0 103.5L938.5 105.5L940.0 105.5L941.5 107.9L943.0 108.0L944.5 110.4L946.0 110.4L947.5 112.9L949.0 113.1L950.5 115.6L952.0 115.7L953.5 118.3L955.0 118.4L956.5 120.9L958.0 121.0L959.5 123.4L961.0 123.5L962.5 126.0L964.0 126.1L965.5 128.5L967.0 128.6L968.5 131.1L970.0 131.2L971.5 133.6L973.0 133.7L974.5 136.2L976.0 136.2L977.5 138.7L979.0 138.7L980.5 141.2L982.0 141.2L983.5 143.7L985.0 143.5L986.5 145.7L988.0 145.4L989.5 147.5L991.0 147.3L992.5 149.4L994.0 149.3L995.5 151.5L997.0 151.3L998.5 153.6L1000.0 153.4L1001.5 156.1L1003.0 156.4L1004.5 159.1L1006.0 159.4L1007.5 162.1L1009.0 162.8L1010.5 166.2L1012.0 167.1L1013.5 170.5L1015.0 171.4L1016.5 175.6L1018.0 177.4L1019.5 181.6L1021.0 183.4L1022.5 188.1L1024.0 190.4L1025.5 195.1L1027.0 197.4L1028.5 202.8L1030.0 205.8L1031.5 211.2L1033.0 214.6L1034.5 220.6L1036.0 224.2L1037.5 230.8L1039.0 236.4L1040.5 244.3L1042.0 250.7L1043.5 259.9L1045.0 267.8L1046.5 278.6L1048.0 286.4L1049.5 287.6L1051.0 286.4L1052.5 287.6L1054.0 286.4L1055.5 287.6L1057.0 286.4L1058.5 287.6L1060.0 286.4L1061.5 287.6L1063.0 286.4L1064.5 287.6L1066.0 286.4L1067.5 287.6L1069.0 286.4L1070.5 287.6L1072.0 286.4L1073.5 287.6L1075.0 286.4L1076.5 287.6L1078.0 286.4L1079.5 287.6L1081.0 286.4L1082.5 287.6L1084.0 286.4L1085.5 287.6L1087.0 286.4L1088.5 287.6L1090.0 286.4L1091.5 287.6L1093.0 286.4L1094.5 287.6L1096.0 286.4L1097.5 287.6L1099.0 286.4L1100.5 287.6L1102.0 286.4L1103.5 287.6L1105.0 286.4L1106.5 287.6L1108.0 286.4L1109.5 287.6L1111.0 286.4L1112.5 287.6L1114.0 286.4L1115.5 287.6L1117.0 286.4L1118.5 287.6L1120.0 286.4L1121.5 287.6L1123.0 286.4L1124.5 287.6L1126.0 286.4L1127.5 287.6L1129.0 286.4L1130.5 287.6L1132.0 286.4L1133.5 287.6L1135.0 286.4L1135.0 288Z"/></clipPath><linearGradient id="cgb" gradientUnits="userSpaceOnUse" x1="0" y1="92" x2="0" y2="288"><stop offset="0" stop-color="#3c6a46" stop-opacity=".6"/><stop offset=".3" stop-color="#2c5535" stop-opacity=".72"/><stop offset=".55" stop-color="#10281a" stop-opacity=".85"/><stop offset=".75" stop-color="#000" stop-opacity="1"/><stop offset="1" stop-color="#000"/></linearGradient><radialGradient id="wgb" gradientUnits="userSpaceOnUse" cx="930" cy="232" r="1" gradientTransform="translate(930 232) scale(95 52) translate(-930 -232)"><stop offset="0" stop-color="#fff" stop-opacity="1"/><stop offset=".45" stop-color="#fff" stop-opacity=".75"/><stop offset="1" stop-color="#fff" stop-opacity="0"/></radialGradient><radialGradient id="whb" gradientUnits="userSpaceOnUse" cx="800" cy="272" r="1" gradientTransform="translate(800 272) scale(70 14) translate(-800 -272)"><stop offset="0" stop-color="#fff" stop-opacity=".8"/><stop offset="1" stop-color="#fff" stop-opacity="0"/></radialGradient><filter id="blb" x="-5%" y="-20%" width="110%" height="140%"><feGaussianBlur stdDeviation="5 6"/></filter><linearGradient id="bgb" gradientUnits="userSpaceOnUse" x1="0" y1="266" x2="0" y2="288"><stop offset="0" stop-color="#b4dcba" stop-opacity="0"/><stop offset="1" stop-color="#b4dcba" stop-opacity=".95"/></linearGradient></defs><rect x="738" y="91" width="398" height="198" fill="#6e6e6e"/><rect x="739" y="289" width="398" height="1" fill="#f4f4f4"/><rect x="739" y="92" width="396" height="196" fill="#060606"/><path d="M837.75 92V288M739 141.00H1135" stroke="#454545" stroke-width="1.2"/><path d="M936.50 92V288M739 189.75H1135" stroke="#454545" stroke-width="1.2"/><path d="M1035.25 92V288M739 238.50H1135" stroke="#454545" stroke-width="1.2"/><path d="M788.4 92V288M739 116.5H1135" stroke="#4a4a4a" stroke-width="1" stroke-dasharray="1 2"/><path d="M887.1 92V288M739 165.2H1135" stroke="#4a4a4a" stroke-width="1" stroke-dasharray="1 2"/><path d="M985.9 92V288M739 214.0H1135" stroke="#4a4a4a" stroke-width="1" stroke-dasharray="1 2"/><path d="M1084.7 92V288M739 262.8H1135" stroke="#4a4a4a" stroke-width="1" stroke-dasharray="1 2"/><path d="M742.0 288L742.0 214.8L743.5 223.2L745.0 226.1L746.5 233.5L748.0 234.8L749.5 240.2L751.0 240.8L752.5 244.8L754.0 244.1L755.5 248.1L757.0 247.3L758.5 250.6L760.0 249.2L761.5 252.5L763.0 251.1L764.5 254.4L766.0 252.6L767.5 255.4L769.0 253.5L770.5 256.4L772.0 254.4L773.5 257.2L775.0 255.3L776.5 257.8L778.0 255.5L779.5 258.0L781.0 255.8L782.5 258.3L784.0 256.0L785.5 258.5L787.0 256.2L788.5 258.6L790.0 256.1L791.5 258.3L793.0 255.7L794.5 257.9L796.0 255.3L797.5 257.5L799.0 254.9L800.5 257.1L802.0 254.3L803.5 256.3L805.0 253.5L806.5 255.5L808.0 252.7L809.5 254.7L811.0 251.9L812.5 253.9L814.0 251.1L815.5 253.0L817.0 250.0L818.5 251.9L820.0 248.9L821.5 250.7L823.0 247.7L824.5 249.5L826.0 246.6L827.5 248.4L829.0 245.2L830.5 246.7L832.0 243.5L833.5 245.0L835.0 241.7L836.5 243.2L838.0 240.0L839.5 241.5L841.0 238.0L842.5 239.2L844.0 235.6L845.5 236.8L847.0 233.2L848.5 234.4L850.0 230.8L851.5 231.3L853.0 227.1L854.5 227.6L856.0 223.3L857.5 223.8L859.0 218.9L860.5 218.6L862.0 213.4L863.5 213.0L865.0 207.8L866.5 206.5L868.0 200.4L869.5 199.1L871.0 193.0L872.5 191.8L874.0 185.7L875.5 184.5L877.0 178.4L878.5 177.2L880.0 171.4L881.5 170.4L883.0 164.7L884.5 163.7L886.0 157.9L887.5 157.1L889.0 151.4L890.5 150.6L892.0 145.0L893.5 144.2L895.0 138.4L896.5 137.3L898.0 131.5L899.5 130.5L901.0 124.5L902.5 123.2L904.0 117.0L905.5 115.7L907.0 109.7L908.5 108.8L910.0 103.0L911.5 102.6L913.0 98.4L914.5 99.0L916.0 94.8L917.5 96.4L919.0 93.2L920.5 94.7L922.0 91.8L923.5 94.0L925.0 91.5L926.5 93.7L928.0 91.7L929.5 94.6L931.0 92.8L932.5 95.8L934.0 94.0L935.5 97.0L937.0 95.3L938.5 98.5L940.0 96.8L941.5 100.0L943.0 98.8L944.5 102.7L946.0 101.8L947.5 105.7L949.0 104.8L950.5 108.7L952.0 107.9L953.5 111.9L955.0 111.0L956.5 115.0L958.0 114.2L959.5 118.2L961.0 117.4L962.5 121.4L964.0 120.5L965.5 124.5L967.0 123.7L968.5 127.9L970.0 127.5L971.5 131.9L973.0 131.6L974.5 136.0L976.0 135.6L976.0 288Z" fill="#b81a22"/><path d="M910.0 288L910.0 121.2L911.5 118.6L913.0 112.8L914.5 110.2L916.0 105.5L917.5 104.4L919.0 100.2L920.5 101.0L922.0 98.7L923.5 99.5L925.0 97.7L926.5 99.3L928.0 97.7L929.5 99.3L931.0 98.1L932.5 100.3L934.0 99.4L935.5 101.6L937.0 100.9L938.5 103.5L940.0 102.9L941.5 105.5L943.0 105.0L944.5 107.9L946.0 107.5L947.5 110.4L949.0 110.3L950.5 113.6L952.0 113.6L953.5 116.9L955.0 117.0L956.5 120.2L956.5 288Z" fill="#c8c81c"/><path d="M826.4 288L826.4 245.2L827.9 245.9L829.4 243.4L830.9 244.2L832.4 241.7L833.9 242.4L835.4 239.9L836.9 240.7L838.4 238.2L839.9 238.6L841.4 235.8L842.9 236.2L844.4 233.4L845.9 233.8L847.4 231.0L848.9 231.2L850.4 227.7L851.9 227.4L853.4 223.9L854.9 223.7L856.4 220.2L857.9 219.0L859.4 214.6L860.9 213.4L862.4 209.1L863.9 207.7L865.4 202.9L866.9 201.3L868.4 196.5L869.9 194.9L871.4 190.1L872.9 188.5L874.4 183.7L875.9 182.1L877.4 177.3L878.9 175.8L880.4 171.2L881.9 169.8L883.4 165.2L884.9 163.8L886.4 159.2L887.9 158.2L889.4 154.1L890.9 153.1L892.4 148.9L893.9 147.9L895.4 143.8L896.9 142.8L898.4 138.6L899.9 137.7L899.9 288Z" fill="#1a86d8"/><path d="M871.2 288L871.2 191.6L872.7 190.0L874.2 185.2L875.7 183.6L877.2 178.8L878.7 177.3L880.2 172.6L881.7 171.2L883.2 166.6L884.7 165.2L886.2 160.6L887.7 159.3L889.2 155.2L890.7 154.2L892.2 150.0L893.7 149.1L895.2 144.9L896.7 143.9L898.2 139.7L899.7 138.8L901.2 134.6L902.7 133.4L904.2 129.0L905.7 127.8L907.2 123.5L908.7 122.1L910.2 117.3L911.7 115.6L913.2 110.8L913.2 288Z" fill="#c79ad0"/><path d="M985.6 288L985.6 140.3L987.6 145.9L989.6 142.8L991.6 148.4L993.6 145.3L995.6 151.1L997.6 148.1L999.6 153.8L1001.6 150.8L1003.6 157.2L1005.6 154.8L1007.6 161.2L1009.6 158.8L1011.6 166.1L1013.6 164.5L1015.6 171.8L1017.6 170.8L1019.6 179.2L1021.6 178.8L1023.6 187.5L1025.6 187.8L1027.6 196.9L1029.6 197.6L1031.6 207.6L1033.6 208.8L1035.6 219.6L1037.6 221.6L1039.6 233.7L1041.6 238.3L1043.6 252.5L1045.6 258.8L1045.6 288Z" fill="#22c022"/><path d="M985.7 288L985.7 142.3L987.2 144.4L988.7 144.2L990.2 146.3L991.7 146.1L993.2 148.2L994.7 148.0L996.2 150.2L997.7 150.1L999.2 152.3L1000.7 152.1L1002.2 154.5L1003.7 154.8L1005.2 157.5L1006.7 157.8L1008.2 160.5L1009.7 160.8L1011.2 164.1L1012.7 165.1L1014.2 168.4L1015.7 169.4L1017.2 173.0L1018.7 174.8L1020.2 179.0L1021.7 180.8L1023.2 185.2L1024.7 187.5L1026.2 192.2L1027.7 194.5L1029.2 199.4L1030.7 202.4L1032.2 207.8L1033.7 210.8L1035.2 216.8L1036.7 220.4L1038.2 226.4L1039.7 231.3L1041.2 239.2L1042.7 244.8L1044.2 254.0L1045.7 260.8L1047.2 271.6L1048.7 279.8L1048.7 288Z" fill="#14c8c4"/><rect x="740" y="110" width="2" height="35" fill="#18c018"/><rect x="740" y="145" width="2" height="48" fill="#d8d020"/><rect x="740" y="193" width="2.4" height="95" fill="#9adcc0"/><rect x="739" y="92" width="1" height="196" fill="#4c7a50"/><g clip-path="url(#hcb)"><rect x="742" y="92" width="394" height="196" fill="#b7debd"/><path d="M742.0 288L742.0 235.5L745.0 250.1L748.0 255.7L751.0 258.1L754.0 259.8L757.0 261.1L760.0 262.0L763.0 262.7L766.0 263.3L769.0 263.7L772.0 264.0L775.0 263.8L778.0 263.6L781.0 263.4L784.0 263.2L787.0 263.0L790.0 262.6L793.0 262.3L796.0 261.9L799.0 261.6L802.0 261.0L805.0 260.4L808.0 259.7L811.0 259.0L814.0 258.4L817.0 257.5L820.0 256.6L823.0 255.6L826.0 254.7L829.0 253.6L832.0 252.2L835.0 250.9L838.0 249.5L841.0 248.0L844.0 246.2L847.0 244.4L850.0 242.6L853.0 239.9L856.0 237.3L859.0 234.3L862.0 230.7L865.0 227.1L868.0 223.4L871.0 219.6L874.0 216.2L877.0 213.0L880.0 209.8L883.0 207.3L886.0 204.7L889.0 202.4L892.0 200.6L895.0 198.7L898.0 197.2L901.0 195.7L904.0 194.3L907.0 193.0L910.0 191.7L913.0 190.6L916.0 189.6L919.0 189.1L922.0 188.8L925.0 188.7L928.0 188.7L931.0 188.7L934.0 188.8L937.0 188.9L940.0 189.2L943.0 189.5L946.0 189.8L949.0 190.2L952.0 190.7L955.0 191.1L958.0 191.6L961.0 192.1L964.0 192.7L967.0 193.2L970.0 193.9L973.0 194.5L976.0 195.1L979.0 195.8L982.0 196.5L985.0 197.2L988.0 197.8L991.0 198.4L994.0 199.0L997.0 199.7L1000.0 200.4L1003.0 201.6L1006.0 202.7L1009.0 204.0L1012.0 205.8L1015.0 207.6L1018.0 210.4L1021.0 213.2L1024.0 216.9L1027.0 220.6L1030.0 225.6L1033.0 231.1L1036.0 237.6L1039.0 246.5L1042.0 257.7L1045.0 272.5L1048.0 288.0L1051.0 288.0L1054.0 288.0L1057.0 288.0L1060.0 288.0L1063.0 288.0L1066.0 288.0L1069.0 288.0L1072.0 288.0L1075.0 288.0L1078.0 288.0L1081.0 288.0L1084.0 288.0L1087.0 288.0L1090.0 288.0L1093.0 288.0L1096.0 288.0L1099.0 288.0L1102.0 288.0L1105.0 288.0L1108.0 288.0L1111.0 288.0L1114.0 288.0L1117.0 288.0L1120.0 288.0L1123.0 288.0L1126.0 288.0L1129.0 288.0L1132.0 288.0L1135.0 288.0L1135.0 288Z" fill="#fff" opacity=".9" filter="url(#blb)"/><rect x="742" y="260" width="394" height="28" fill="url(#bgb)"/><path d="M739 141.00H1135" stroke="#5c7c60" stroke-opacity=".45" stroke-width="1.2"/><path d="M739 189.75H1135" stroke="#5c7c60" stroke-opacity=".45" stroke-width="1.2"/><path d="M739 238.50H1135" stroke="#5c7c60" stroke-opacity=".45" stroke-width="1.2"/><rect x="742" y="287" width="394" height="1.2" fill="#5e9a64"/></g><path d="M744.5 227.7V288M747.5 237.0V288M750.5 243.0V288M753.5 246.7V288M758.5 251.4V288M761.5 253.3V288M764.5 255.2V288M767.5 256.2V288M770.5 257.1V288M775.5 258.5V288M778.5 258.8V288M781.5 259.0V288M784.5 259.2V288M789.5 259.3V288M792.5 258.9V288M795.5 258.6V288M798.5 258.2V288M801.5 257.6V288M806.5 256.3V288M809.5 255.5V288M812.5 254.7V288M815.5 253.8V288M820.5 251.9V288M823.5 250.7V288M826.5 249.6V288M829.5 248.1V288M832.5 246.4V288M837.5 243.5V288M840.5 241.6V288M843.5 239.2V288M846.5 236.8V288M851.5 232.1V288M854.5 228.4V288M857.5 224.6V288M860.5 219.4V288M863.5 213.8V288M868.5 202.4V288M871.5 195.0V288M874.5 187.7V288M877.5 180.4V288M882.5 169.0V288M885.5 162.2V288M888.5 155.7V288M891.5 149.3V288M894.5 142.7V288M899.5 131.3V288M902.5 124.0V288M905.5 116.5V288M908.5 109.6V288M913.5 101.0V288M916.5 97.7V288M919.5 96.1V288M922.5 94.9V288M925.5 94.6V288M930.5 95.8V288M933.5 97.0V288M936.5 98.2V288M939.5 99.8V288M944.5 103.5V288M947.5 106.5V288M950.5 109.5V288M953.5 112.7V288M956.5 115.8V288M961.5 121.1V288M964.5 124.3V288M967.5 127.5V288M970.5 131.4V288M975.5 138.1V288M978.5 140.9V288M981.5 143.4V288M984.5 145.8V288M987.5 147.7V288M992.5 150.8V288M995.5 152.9V288M998.5 155.0V288M1001.5 157.5V288M1006.5 162.5V288M1009.5 166.1V288M1012.5 170.4V288M1015.5 175.0V288M1018.5 181.0V288M1023.5 191.8V288M1026.5 198.8V288M1029.5 207.0V288M1032.5 215.6V288M1037.5 232.2V288M1040.5 245.8V288M1043.5 261.3V288M1046.5 280.0V288" stroke="url(#cgb)" stroke-width="0.85" fill="none"/><rect x="1048" y="287" width="87" height="1" fill="#8fcf9a"/><path d="M739 288L1135 92" stroke="#fff" stroke-width="1.35" style="mix-blend-mode:difference"/></svg><div style="left:737px;top:294px;width:20px;height:20px;background:#f0f0f0;border:1px solid #7c7c7c"></div><svg class="ic" style="left:740px;top:297px" width="14" height="14" viewBox="0 0 14 14" ><path d="M7 0V14M0 7H14" stroke="#484848" stroke-width="1.6"/><rect x="4.2" y="4.2" width="5.6" height="5.6" fill="#fff" stroke="#484848" stroke-width="1.2"/><path d="M7 5V9M5 7H9" stroke="#aaa" stroke-width="1"/></svg><svg class="ic" style="left:764px;top:297px" width="14" height="14" viewBox="0 0 14 14" ><g transform="rotate(0 7 7)"><path d="M0 0H5.8L0 5.8Z" fill="#484848"/><path d="M2 2L6.4 6.4" stroke="#484848" stroke-width="2.7"/></g><g transform="rotate(90 7 7)"><path d="M0 0H5.8L0 5.8Z" fill="#484848"/><path d="M2 2L6.4 6.4" stroke="#484848" stroke-width="2.7"/></g><g transform="rotate(180 7 7)"><path d="M0 0H5.8L0 5.8Z" fill="#484848"/><path d="M2 2L6.4 6.4" stroke="#484848" stroke-width="2.7"/></g><g transform="rotate(270 7 7)"><path d="M0 0H5.8L0 5.8Z" fill="#484848"/><path d="M2 2L6.4 6.4" stroke="#484848" stroke-width="2.7"/></g><rect x="6" y="6" width="2" height="2" fill="#d0d0d0"/></svg><svg class="ic" style="left:787px;top:296px" width="16" height="16" viewBox="0 0 16 16" ><g transform="rotate(0 8 8)"><path d="M7 7V1L1 7Z" fill="#484848"/><path d="M1 1L5 5" stroke="#484848" stroke-width="2.8"/></g><g transform="rotate(90 8 8)"><path d="M7 7V1L1 7Z" fill="#484848"/><path d="M1 1L5 5" stroke="#484848" stroke-width="2.8"/></g><g transform="rotate(180 8 8)"><path d="M7 7V1L1 7Z" fill="#484848"/><path d="M1 1L5 5" stroke="#484848" stroke-width="2.8"/></g><g transform="rotate(270 8 8)"><path d="M7 7V1L1 7Z" fill="#484848"/><path d="M1 1L5 5" stroke="#484848" stroke-width="2.8"/></g></svg><svg class="ic" style="left:811px;top:296px" width="16" height="16" viewBox="0 0 16 16" ><path d="M8 0L16 8L8 16L0 8Z" fill="#484848"/><rect x="6.6" y="3.4" width="2.8" height="2.8" fill="#e8e8e8"/><rect x="6.6" y="9.8" width="2.8" height="2.8" fill="#e8e8e8"/><rect x="3.4" y="6.6" width="2.8" height="2.8" fill="#e8e8e8"/><rect x="9.8" y="6.6" width="2.8" height="2.8" fill="#e8e8e8"/></svg><div style="left:833px;top:294px;width:54px;height:20px;background:#f2f2f2;border:1px solid #7e7e7e"><span style="left:6px;top:3px">1</span><div style="left:38px;top:0;width:14px;height:18px;background:linear-gradient(90deg,#e8e8e8,#d2d2d2)"></div><svg class="ic" style="left:42px;top:3px" width="7" height="12" viewBox="0 0 7 12"><path d="M0 4L3.5 0L7 4ZM0 8L3.5 12L7 8Z" fill="#1a1a1a"/></svg></div><div style="left:891px;top:294px;width:54px;height:20px;background:#f2f2f2;border:1px solid #7e7e7e"><span style="left:6px;top:3px">1</span><div style="left:38px;top:0;width:14px;height:18px;background:linear-gradient(90deg,#e8e8e8,#d2d2d2)"></div><svg class="ic" style="left:42px;top:3px" width="7" height="12" viewBox="0 0 7 12"><path d="M0 4L3.5 0L7 4ZM0 8L3.5 12L7 8Z" fill="#1a1a1a"/></svg></div><div style="left:1025px;top:294px;width:54px;height:20px;background:#f2f2f2;border:1px solid #7e7e7e"><span style="left:6px;top:3px">1</span><div style="left:38px;top:0;width:14px;height:18px;background:linear-gradient(90deg,#e8e8e8,#d2d2d2)"></div><svg class="ic" style="left:42px;top:3px" width="7" height="12" viewBox="0 0 7 12"><path d="M0 4L3.5 0L7 4ZM0 8L3.5 12L7 8Z" fill="#1a1a1a"/></svg></div><div style="left:1083px;top:294px;width:54px;height:20px;background:#f2f2f2;border:1px solid #7e7e7e"><span style="left:6px;top:3px">1</span><div style="left:38px;top:0;width:14px;height:18px;background:linear-gradient(90deg,#e8e8e8,#d2d2d2)"></div><svg class="ic" style="left:42px;top:3px" width="7" height="12" viewBox="0 0 7 12"><path d="M0 4L3.5 0L7 4ZM0 8L3.5 12L7 8Z" fill="#1a1a1a"/></svg></div><svg class="ic" style="left:951px;top:296px" width="17" height="17" viewBox="0 0 17 17" ><path d="M10.6 10.6L15.4 15.4" stroke="#3c3c3c" stroke-width="2.6" stroke-linecap="round"/><circle cx="6.8" cy="6.8" r="5.6" fill="#fff" stroke="#3c3c3c" stroke-width="2"/><rect x="4.8" y="4.8" width="3.6" height="3.6" fill="#0b52b6"/></svg><svg class="ic" style="left:1006px;top:299px" width="11" height="10" viewBox="0 0 11 10" ><path d="M0 0H11L5.5 4.6ZM0 5H11L5.5 9.8Z" fill="#0b52b6"/></svg><div style="left:738px;top:516px;width:398px;height:12px;background:linear-gradient(90deg,#000,#fff)"></div><svg class="ic" style="left:738px;top:516px" width="398" height="13" viewBox="0 0 398 13" ><path d="M0 4L8 12H0Z" fill="#808080"/><path d="M0.5 4.5L7.5 11.5" stroke="#f4f4f4" stroke-width="1.1"/><rect x="0" y="0" width="1" height="12" fill="#7a7a7a"/><path d="M198.5 0V5" stroke="#ddd" stroke-width="1"/><path d="M198.5 4.5L205 11.5H192Z" fill="#8a8a8a" stroke="#f4f4f4" stroke-width="1"/><path d="M396.5 4.5V11.5H389.5Z" fill="#fff" stroke="#222" stroke-width="1"/><path d="M397 0V6" stroke="#bbb" stroke-width="1"/></svg><div style="left:737px;top:534px;width:400px;height:15px;border:1px solid;border-color:#8c8c8c #f8f8f8 #f8f8f8 #8c8c8c"></div><div style="left:737px;top:553px;width:115px;height:20px;border:1px solid #8a8a8a;border-radius:2px;background:linear-gradient(#f4f4f4,#e6e6e6 50%,#d2d2d2)"><span style="left:6px;top:3px;white-space:nowrap">16-bit (64K)</span><div style="left:96px;top:2px;width:1px;height:14px;background:#a2a2a2"></div><svg class="ic" style="left:100px;top:6px" width="10" height="6" viewBox="0 0 10 6"><path d="M0 0H10L5 5.6Z" fill="#111"/></svg></div><div style="left:856px;top:553px;width:69px;height:20px;border:1px solid #8a8a8a;border-radius:2px;background:linear-gradient(#f4f4f4,#e6e6e6 50%,#d2d2d2)"><span style="left:6px;top:3px;white-space:nowrap">Lines</span><div style="left:50px;top:2px;width:1px;height:14px;background:#a2a2a2"></div><svg class="ic" style="left:54px;top:6px" width="10" height="6" viewBox="0 0 10 6"><path d="M0 0H10L5 5.6Z" fill="#111"/></svg></div><div style="left:737px;top:577px;width:400px;height:21px;border:1px solid #8a8a8a;border-radius:2px;background:linear-gradient(#f4f4f4,#e6e6e6 50%,#d2d2d2)"><div style="left:7px;top:4px;width:12px;height:12px;border:2px solid #5e5e5e;border-top-width:3px;background:#e4e4e4"></div><span style="left:28px;top:4px;white-space:nowrap">_201126104145</span><div style="left:381px;top:2px;width:1px;height:15px;background:#a2a2a2"></div><svg class="ic" style="left:385px;top:6px" width="10" height="6" viewBox="0 0 10 6"><path d="M0 0H10L5 5.6Z" fill="#111"/></svg></div><div style="left:1021px;top:553px;width:20px;height:20px;background:#f1f1f1;border:1px solid #8a8a8a"></div><div style="left:1045px;top:553px;width:20px;height:20px;background:#f1f1f1;border:1px solid #8a8a8a"></div><div style="left:1069px;top:553px;width:20px;height:20px;background:#f1f1f1;border:1px solid #8a8a8a"></div><div style="left:1093px;top:553px;width:20px;height:20px;background:#f1f1f1;border:1px solid #8a8a8a"></div><div style="left:1117px;top:553px;width:20px;height:20px;background:#f1f1f1;border:1px solid #8a8a8a"></div><svg class="ic" style="left:1023px;top:555px" width="16" height="16" viewBox="0 0 16 16" ><path d="M2 2V14H15" fill="none" stroke="#222" stroke-width="1.3"/><path d="M3 14L4.5 6L6.5 12L9 13L12 8L13.5 3L14.5 14Z" fill="#8c8c8c"/><path d="M8.6 5H13V9" fill="none" stroke="#111" stroke-width="1.5"/><path d="M7 5L10.4 2.2V7.8Z" fill="#111"/></svg><svg class="ic" style="left:1047px;top:555px" width="16" height="16" viewBox="0 0 16 16" ><path d="M2 2V14H15" fill="none" stroke="#222" stroke-width="1.3"/><path d="M3 14V2.5L4.2 2.5L6.5 10L8 14Z" fill="#e01010"/><path d="M6 14L7 10.5L10 11.5L11 14Z" fill="#10b010"/><path d="M10.4 14L11.4 10L13.6 6L14.6 14Z" fill="#1010e0"/></svg><svg class="ic" style="left:1071px;top:555px" width="16" height="16" viewBox="0 0 16 16" ><path d="M2 2V14H15" fill="none" stroke="#222" stroke-width="1.3"/><path d="M3 14L3.6 9.5L8 11.5L13 9.5L14.6 14Z" fill="#8c8c8c"/><path d="M3.4 8.5L4.4 3L7.4 8.8Z" fill="#e01010"/><path d="M6.6 8.6L9 5.4L12 8.4Z" fill="#10b010"/><path d="M10.8 8.4L13.4 4.4L14.6 8.6Z" fill="#1010e0"/></svg><svg class="ic" style="left:1095px;top:555px" width="16" height="16" viewBox="0 0 16 16" ><path d="M2 2V14H15" fill="none" stroke="#222" stroke-width="1.3"/><path d="M3 14L4.5 6L6.5 12L9 13L12 8L13.5 3L14.5 14Z" fill="#8c8c8c"/><path d="M3 14C3.6 7 7 3 14 2.6" fill="none" stroke="#1818e8" stroke-width="1.3"/></svg><svg class="ic" style="left:1119px;top:555px" width="16" height="16" viewBox="0 0 16 16" ><rect x="1.5" y="1.5" width="13" height="13" fill="#fff"/><path d="M2.5 1.5V14.5M1.5 2.5H14.5" stroke="#2c2cff" stroke-width="1.7"/><path d="M6.2 1.5V14.5M1.5 6.2H14.5" stroke="#2c2cff" stroke-width="1.7"/><path d="M9.9 1.5V14.5M1.5 9.9H14.5" stroke="#2c2cff" stroke-width="1.7"/><path d="M13.6 1.5V14.5M1.5 13.6H14.5" stroke="#2c2cff" stroke-width="1.7"/><path d="M1.5 14.6H14.8" stroke="#111" stroke-width="1.2"/></svg><div style="left:740px;top:607px;width:12px;height:12px;background:#f00000;border:1px solid #222"></div><span style="left:754px;top:607px">R</span><div style="left:785px;top:607px;width:12px;height:12px;background:#00e800;border:1px solid #222"></div><span style="left:799px;top:607px">G</span><div style="left:830px;top:607px;width:12px;height:12px;background:#0000f0;border:1px solid #222"></div><span style="left:844px;top:607px">B</span><div style="left:872px;top:604px;width:70px;height:18px;background:#f2f2f2;border:1px solid #8a8a8a"></div><svg class="ic" style="left:875px;top:607px" width="12" height="12" viewBox="0 0 12 12" ><rect width="12" height="12" fill="#111"/><rect x="1" y="1" width="3.4" height="10" fill="#f00"/><rect x="4.4" y="1" width="3.3" height="10" fill="#0e0"/><rect x="7.7" y="1" width="3.3" height="10" fill="#00f"/></svg><span style="left:889px;top:607px">RGB/K</span><svg class="ic" style="left:949px;top:607px" width="12" height="12" viewBox="0 0 12 12" ><rect width="12" height="12" fill="#222"/><rect x="1" y="1" width="10" height="10" fill="#f0f0ff"/><rect x="1" y="1" width="2" height="2" fill="#a8a8d8"/><rect x="1" y="5" width="2" height="2" fill="#a8a8d8"/><rect x="1" y="9" width="2" height="2" fill="#a8a8d8"/><rect x="3" y="3" width="2" height="2" fill="#a8a8d8"/><rect x="3" y="7" width="2" height="2" fill="#a8a8d8"/><rect x="5" y="1" width="2" height="2" fill="#a8a8d8"/><rect x="5" y="5" width="2" height="2" fill="#a8a8d8"/><rect x="5" y="9" width="2" height="2" fill="#a8a8d8"/><rect x="7" y="3" width="2" height="2" fill="#a8a8d8"/><rect x="7" y="7" width="2" height="2" fill="#a8a8d8"/><rect x="9" y="1" width="2" height="2" fill="#a8a8d8"/><rect x="9" y="5" width="2" height="2" fill="#a8a8d8"/><rect x="9" y="9" width="2" height="2" fill="#a8a8d8"/></svg><span style="left:963px;top:607px">A</span><div style="left:1045px;top:603px;width:20px;height:20px;background:#f2f2f2;border:1px solid #8a8a8a"></div><svg class="ic" style="left:1047px;top:605px" width="16" height="16" viewBox="0 0 16 16" ><path d="M8 0.5V15.5M0.5 8H15.5" stroke="#222" stroke-width="1.6"/><path d="M2.6 2.6L13.4 13.4M13.4 2.6L2.6 13.4" stroke="#222" stroke-width="0.9"/></svg><svg class="ic" style="left:1071px;top:605px" width="16" height="16" viewBox="0 0 16 16" ><rect x="3" y="3" width="10" height="10" fill="#0c0c0c"/><path d="M8 0V16M0 8H16M3 3H13V13H3Z" fill="none" stroke="#0c0c0c" stroke-width="1.7"/></svg><svg class="ic" style="left:1095px;top:605px" width="16" height="16" viewBox="0 0 16 16" ><rect x="3" y="3" width="10" height="10" fill="#a8a8a8"/><path d="M8 0V16M0 8H16M3 3H13V13H3Z" fill="none" stroke="#5a5a5a" stroke-width="1.7"/></svg><svg class="ic" style="left:1119px;top:605px" width="16" height="16" viewBox="0 0 16 16" ><rect x="3" y="3" width="10" height="10" fill="#f4f4f4"/><path d="M8 0V16M0 8H16M3 3H13V13H3Z" fill="none" stroke="#3c3c3c" stroke-width="1.7"/></svg><span style="left:734px;top:630.5px;width:76.5px;text-align:right;white-space:nowrap">Shadows:</span><div style="left:815px;top:627px;width:83px;height:20px;background:#f4f4f4;border:1px solid #8a8a8a"><span style="left:5px;top:2.5px;font-size:11.1px">0.00000000</span></div><span style="left:734px;top:654.5px;width:76.5px;text-align:right;white-space:nowrap">Highlights:</span><div style="left:815px;top:651px;width:83px;height:20px;background:#f4f4f4;border:1px solid #8a8a8a"><span style="left:5px;top:2.5px;font-size:11.1px">1.00000000</span></div><span style="left:734px;top:678.5px;width:76.5px;text-align:right;white-space:nowrap">Midtones:</span><div style="left:815px;top:675px;width:83px;height:20px;background:#f4f4f4;border:1px solid #8a8a8a"><span style="left:5px;top:2.5px;font-size:11.1px">0.50000000</span></div><span style="left:734px;top:702.5px;width:76.5px;text-align:right;white-space:nowrap">Low range:</span><div style="left:815px;top:699px;width:83px;height:20px;background:#f4f4f4;border:1px solid #8a8a8a"><span style="left:5px;top:2.5px;font-size:11.1px">0.0000000</span></div><span style="left:734px;top:726.5px;width:76.5px;text-align:right;white-space:nowrap">High range:</span><div style="left:815px;top:723px;width:83px;height:20px;background:#f4f4f4;border:1px solid #8a8a8a"><span style="left:5px;top:2.5px;font-size:11.1px">1.0000000</span></div><div style="left:902px;top:627px;width:163px;height:20px;border:1px solid;border-color:#9a9a9a #f6f6f6 #f6f6f6 #9a9a9a;text-align:center;line-height:21px"><span style="position:static">0, %0.0000</span></div><div style="left:902px;top:651px;width:163px;height:20px;border:1px solid;border-color:#9a9a9a #f6f6f6 #f6f6f6 #9a9a9a;text-align:center;line-height:21px"><span style="position:static">0, %0.0000</span></div><svg class="ic" style="left:1071px;top:629px" width="16" height="16" viewBox="0 0 16 16" ><path d="M1 1V15H15.5" fill="none" stroke="#222" stroke-width="1.2"/><path d="M7 15L10 4L12.4 9L14.6 15Z" fill="#808080"/><path d="M5 1V15" stroke="#f09840" stroke-width="1.8"/></svg><svg class="ic" style="left:1095px;top:629px" width="16" height="16" viewBox="0 0 16 16" ><path d="M1 1V15H15.5" fill="none" stroke="#222" stroke-width="1.2"/><path d="M2 15L4 5L6.4 15Z" fill="#808080"/><path d="M8 15L10.4 4L13 9L14.6 15Z" fill="#808080"/><path d="M6.5 1V15" stroke="#f09840" stroke-width="1.8"/></svg><svg class="ic" style="left:1071px;top:653px" width="16" height="16" viewBox="0 0 16 16" ><path d="M1 1V15H15.5" fill="none" stroke="#222" stroke-width="1.2"/><path d="M2 15L3.6 4L6 10L8 15Z" fill="#808080"/><path d="M11 1V15" stroke="#f09840" stroke-width="1.8"/></svg><svg class="ic" style="left:1095px;top:653px" width="16" height="16" viewBox="0 0 16 16" ><path d="M1 1V15H15.5" fill="none" stroke="#222" stroke-width="1.2"/><path d="M2 15L4 5L6.4 15Z" fill="#808080"/><path d="M8 15L10.4 4L13 9L14.6 15Z" fill="#808080"/><path d="M10.5 1V15" stroke="#f09840" stroke-width="1.8"/></svg><div style="left:1117px;top:627px;width:20px;height:20px;background:linear-gradient(#e4ecf8,#c4d4f0);border:1px solid #7ea4e0;border-radius:2px"></div><svg class="ic" style="left:1120px;top:632px" width="15" height="10" viewBox="0 0 15 10" ><path d="M0 5L4.6 0H15V10H4.6Z" fill="#4a4a4a"/><path d="M6.6 2.2L12.4 7.8M12.4 2.2L6.6 7.8" stroke="#f0f0f0" stroke-width="2"/></svg><svg class="ic" style="left:1120px;top:656px" width="15" height="10" viewBox="0 0 15 10" ><path d="M0 5L4.6 0H15V10H4.6Z" fill="#4a4a4a"/><path d="M6.6 2.2L12.4 7.8M12.4 2.2L6.6 7.8" stroke="#f0f0f0" stroke-width="2"/></svg><svg class="ic" style="left:905px;top:680px" width="15" height="10" viewBox="0 0 15 10" ><path d="M0 5L4.6 0H15V10H4.6Z" fill="#4a4a4a"/><path d="M6.6 2.2L12.4 7.8M12.4 2.2L6.6 7.8" stroke="#f0f0f0" stroke-width="2"/></svg><svg class="ic" style="left:1120px;top:704px" width="15" height="10" viewBox="0 0 15 10" ><path d="M0 5L4.6 0H15V10H4.6Z" fill="#4a4a4a"/><path d="M6.6 2.2L12.4 7.8M12.4 2.2L6.6 7.8" stroke="#f0f0f0" stroke-width="2"/></svg><svg class="ic" style="left:1120px;top:728px" width="15" height="10" viewBox="0 0 15 10" ><path d="M0 5L4.6 0H15V10H4.6Z" fill="#4a4a4a"/><path d="M6.6 2.2L12.4 7.8M12.4 2.2L6.6 7.8" stroke="#f0f0f0" stroke-width="2"/></svg><div style="left:1008px;top:675px;width:105px;height:20px;border:1px solid #8a8a8a;border-radius:2px;background:linear-gradient(#f4f4f4,#e6e6e6 50%,#d2d2d2);text-align:center"><span style="position:static;line-height:19px">Auto Clip Setup</span></div><svg class="ic" style="left:1122px;top:681px" width="12" height="10" viewBox="0 0 12 10" ><path d="M0 4.8L6 0L12 4.8ZM0 10L6 5.2L12 10Z" fill="#0b52b6"/></svg><div style="left:902px;top:707px;width:206px;height:5px;background:#a4a4a4;border:1px solid #787878"></div><div style="left:1102px;top:704px;width:11px;height:11px;border-radius:50%;background:radial-gradient(circle at 40% 35%,#f4f4f4,#c4c4c4);border:1px solid #7a7a7a"></div><div style="left:906px;top:731px;width:207px;height:5px;background:#e8e8e8;border:1px solid #808080"></div><div style="left:902px;top:728px;width:11px;height:11px;border-radius:50%;background:radial-gradient(circle at 40% 35%,#f4f4f4,#c4c4c4);border:1px solid #7a7a7a"></div><div style="left:1124px;top:648px;width:30px;height:26px;background:#000"><span style="left:8px;top:5px;color:#fff">Reset</span></div><svg class="ic" style="left:742px;top:753px" width="11" height="11" viewBox="0 0 11 11" ><path d="M0 0L11 11H0Z" fill="#0b55b0"/></svg><svg class="ic" style="left:767px;top:753px" width="12" height="11" viewBox="0 0 12 11" ><rect width="11.5" height="11" fill="#0b55b0"/></svg><svg class="ic" style="left:791px;top:752px" width="13" height="13" viewBox="0 0 13 13" ><circle cx="6.5" cy="6.5" r="4.9" fill="none" stroke="#0b55b0" stroke-width="1.7"/></svg><svg class="ic" style="left:1046px;top:753px" width="11" height="11" viewBox="0 0 11 11" ><rect x="0.9" y="0.9" width="9.2" height="9.2" fill="none" stroke="#0b55b0" stroke-width="1.8"/></svg><svg class="ic" style="left:1071px;top:753px" width="11" height="11" viewBox="0 0 11 11" ><path d="M0.9 0.9H6.4L10.1 4.6V10.1H0.9Z" fill="none" stroke="#0b55b0" stroke-width="1.8"/><path d="M6 1V5H10" fill="none" stroke="#0b55b0" stroke-width="1.4"/></svg><div style="left:1091px;top:748px;width:21px;height:21px;background:#f4f4f4;border:1px solid #9a9a9a"></div><svg class="ic" style="left:1095px;top:753px" width="13" height="11" viewBox="0 0 13 11" ><path d="M1 5.6L4.8 9.2L12 1.6" fill="none" stroke="#0b55b0" stroke-width="2.4"/></svg><svg class="ic" style="left:1120px;top:752px" width="14" height="14" viewBox="0 0 14 14" ><g transform="rotate(0 7 7)"><path d="M0.7 0.7L4.4 4.4" stroke="#0b55b0" stroke-width="1.7"/><path d="M6 2V6H2Z" fill="#0b55b0"/></g><g transform="rotate(90 7 7)"><path d="M0.7 0.7L4.4 4.4" stroke="#0b55b0" stroke-width="1.7"/><path d="M6 2V6H2Z" fill="#0b55b0"/></g><g transform="rotate(180 7 7)"><path d="M0.7 0.7L4.4 4.4" stroke="#0b55b0" stroke-width="1.7"/><path d="M6 2V6H2Z" fill="#0b55b0"/></g><g transform="rotate(270 7 7)"><path d="M0.7 0.7L4.4 4.4" stroke="#0b55b0" stroke-width="1.7"/><path d="M6 2V6H2Z" fill="#0b55b0"/></g></svg></div>
</body></html>
